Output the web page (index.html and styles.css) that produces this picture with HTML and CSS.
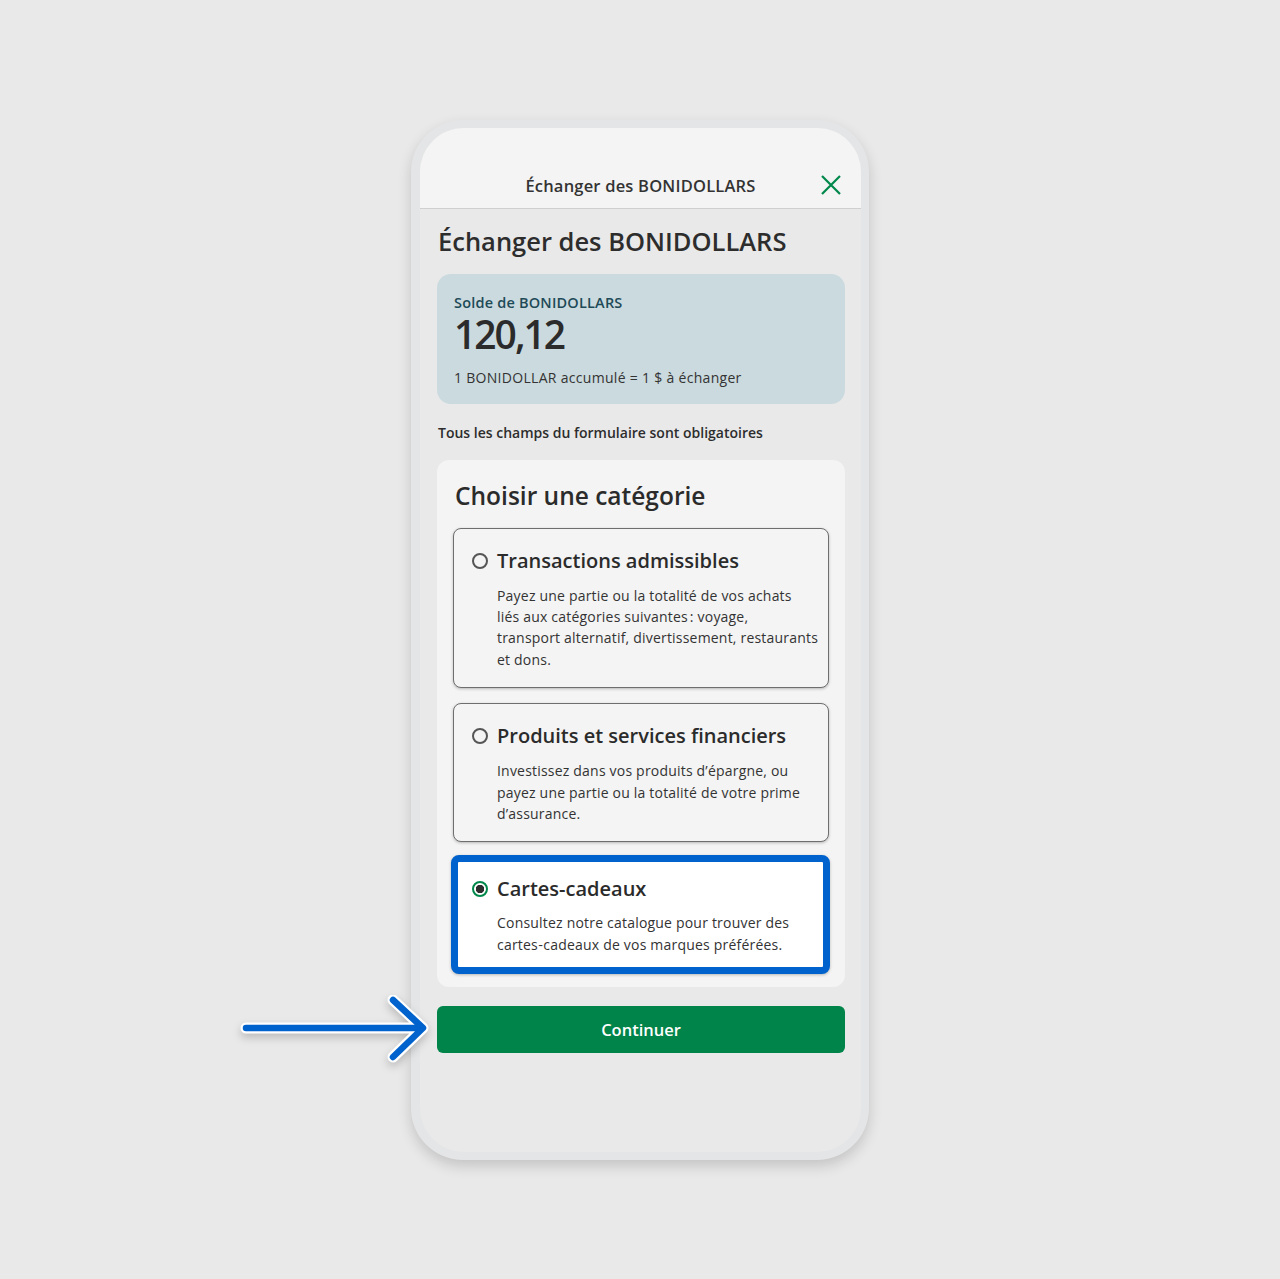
FILE: index.html
```html
<!DOCTYPE html>
<html lang="fr">
  <head>
    <meta charset="UTF-8" />
    <meta name="viewport" content="width=device-width, initial-scale=1.0" />
    <title>Échanger des BONIDOLLARS</title>
    <link rel="stylesheet" href="styles.css">
  </head>
  <body>
    <div class="phone">
      <div class="screen">
        <div class="topbar">
          <span class="topbar-title">Échanger des BONIDOLLARS</span>
          <svg class="close" width="22" height="22" viewBox="0 0 22 22">
            <path d="M2 2 L20 20 M20 2 L2 20" stroke="#00874a" stroke-width="2.2" fill="none" />
          </svg>
        </div>

        <div class="content">
          <h1>Échanger des BONIDOLLARS</h1>

          <div class="balance">
            <div class="balance-label">Solde de BONIDOLLARS</div>
            <div class="balance-amount">120,12</div>
            <div class="balance-note">1 BONIDOLLAR accumulé = 1 $ à échanger</div>
          </div>

          <p class="required">Tous les champs du formulaire sont obligatoires</p>

          <div class="panel">
            <h2>Choisir une catégorie</h2>

            <div class="option">
              <div class="option-head">
                <span class="radio"></span>
                <span class="option-title">Transactions admissibles</span>
              </div>
              <p class="option-text">Payez une partie ou la totalité de vos achats liés&nbsp;aux catégories suivantes&#8239;: voyage, transport&nbsp;alternatif, divertissement, restaurants et dons.</p>
            </div>

            <div class="option">
              <div class="option-head">
                <span class="radio"></span>
                <span class="option-title">Produits et services financiers</span>
              </div>
              <p class="option-text">Investissez dans vos produits d’épargne, ou payez une partie ou la totalité de votre prime d’assurance.</p>
            </div>

            <div class="option option-selected">
              <div class="option-head">
                <span class="radio radio-on"></span>
                <span class="option-title">Cartes-cadeaux</span>
              </div>
              <p class="option-text">Consultez notre catalogue pour trouver des cartes&#8209;cadeaux de vos marques préférées.</p>
            </div>
          </div>

          <button class="continue">Continuer</button>
        </div>
      </div>

      <!-- flèche d'annotation -->
      <svg class="pointer" width="196" height="72" viewBox="0 0 196 72">
        <g fill="none" stroke-linecap="round" stroke-linejoin="round">
          <path d="M6 33 L182 33 M153 5 L183 33 L153 62" stroke="#ffffff" stroke-width="11" />
          <path d="M6 33 L182 33 M153 5 L183 33 L153 62" stroke="#0062cc" stroke-width="6.5" />
        </g>
      </svg>
    </div>
  </body>
</html>
```

FILE: styles.css
```css
body {
  font-family: "Open Sans", Lato, sans-serif;
  display: flex;
  justify-content: center;
  align-items: center;
  height: 100vh;
  margin: 0;
  background-color: #e9e9e9;
  color: #2d2d2d;
}
.phone {
  position: relative;
  width: 458px;
  height: 1040px;
  padding: 8px 8px 8px 9px;
  box-sizing: border-box;
  border-radius: 52px;
  background-color: #e4e5e6;
  box-shadow: 0 6px 14px rgba(0, 0, 0, 0.16);
}
.screen {
  height: 100%;
  border-radius: 44px;
  background-color: #e9e9e9;
  overflow: hidden;
}
.topbar {
  position: relative;
  height: 81px;
  background-color: #f4f4f4;
  border-bottom: 1px solid #cfcfcf;
  display: flex;
  justify-content: center;
  align-items: flex-end;
  padding-bottom: 11px;
  box-sizing: border-box;
}
.topbar-title {
  font-size: 16.5px;
  font-weight: 600;
  line-height: 22px;
  letter-spacing: 0.2px;
  color: #333;
}
.close {
  position: absolute;
  right: 19px;
  bottom: 12px;
}
.content {
  padding: 0 16px 0 17px;
}
h1 {
  font-size: 25.5px;
  font-weight: 600;
  margin: 16px 0 0 1px;
  line-height: 32px;
  color: #2d2d2d;
}
.balance {
  margin-top: 17px;
  background-color: #cbdade;
  border-radius: 14px;
  padding: 19px 17px 17px;
}
.balance-label {
  font-size: 14.5px;
  font-weight: 600;
  letter-spacing: 0.2px;
  color: #1e4a58;
  line-height: 19px;
}
.balance-amount {
  font-size: 39px;
  font-weight: 600;
  line-height: 44px;
  letter-spacing: -2px;
  color: #2b2b2b;
}
.balance-note {
  font-size: 14px;
  line-height: 19px;
  letter-spacing: 0.3px;
  margin-top: 12px;
  color: #333;
}
.required {
  font-size: 14px;
  font-weight: 600;
  margin: 19px 0 0 1px;
  line-height: 19px;
  color: #2d2d2d;
}
.panel {
  margin-top: 18px;
  background-color: #f4f4f4;
  border-radius: 12px;
  padding: 20px 16px 13px;
}
h2 {
  font-size: 24.5px;
  font-weight: 600;
  margin: 0 0 16px 2px;
  line-height: 32px;
  color: #2b2b2b;
}
.option {
  border: 1px solid #6e6e6e;
  border-radius: 8px;
  background-color: #f4f4f4;
  box-shadow: 0 1px 3px rgba(0, 0, 0, 0.25);
  padding: 18px 9px 17px 18px;
  margin-bottom: 15px;
}
.option:last-child {
  margin-bottom: 0;
}
.option-selected {
  border: 7px solid #0062cc;
  background-color: #ffffff;
  margin: -2px -1px 0 -2px;
  padding: 13px 12px 12px 14px;
}
.option-head {
  display: flex;
  align-items: center;
  gap: 9px;
}
.radio {
  width: 16px;
  height: 16px;
  box-sizing: border-box;
  border: 2px solid #555;
  border-radius: 50%;
  flex-shrink: 0;
}
.radio-on {
  border-color: #00874a;
  background: radial-gradient(circle, #2d2d2d 0 4px, #ffffff 4.5px);
}
.option-title {
  font-size: 20px;
  font-weight: 600;
  line-height: 28px;
  color: #2b2b2b;
}
.option-text {
  margin: 10px 0 0 25px;
  font-size: 14px;
  line-height: 21.4px;
  letter-spacing: 0.2px;
  color: #333;
}
.option-selected .option-text {
  margin-top: 9px;
}
.continue {
  display: block;
  width: 100%;
  height: 47px;
  margin-top: 19px;
  border: none;
  border-radius: 6px;
  background-color: #00844a;
  color: white;
  font-family: "Open Sans", Lato, sans-serif;
  font-size: 16.5px;
  font-weight: 600;
  cursor: pointer;
}
.pointer {
  position: absolute;
  left: -171px;
  top: 875px;
  filter: drop-shadow(0 4px 4px rgba(0, 0, 0, 0.2));
}
```
